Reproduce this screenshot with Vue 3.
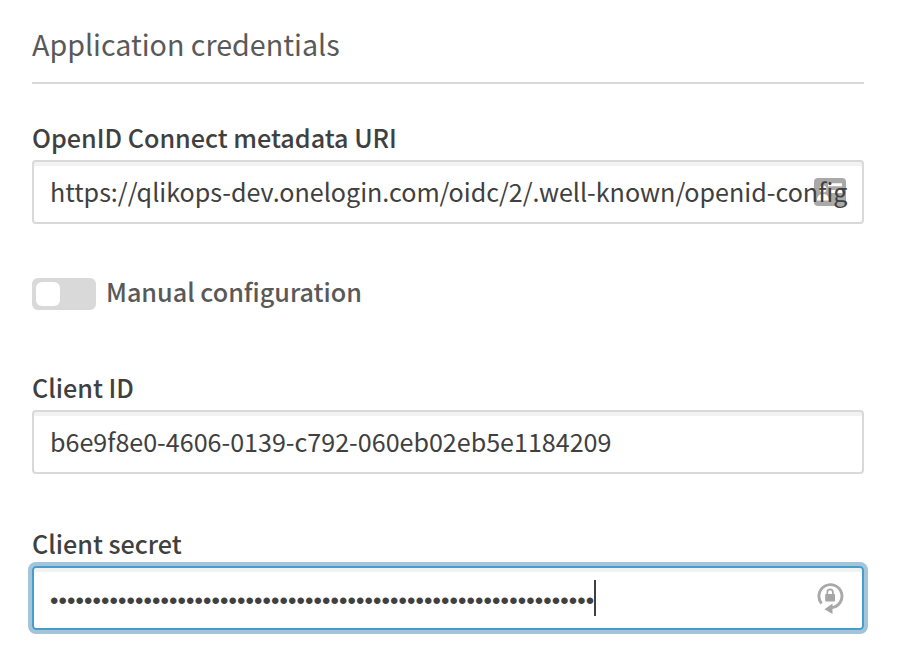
<script setup>
const metadataUri = 'https://qlikops-dev.onelogin.com/oidc/2/.well-known/openid-config'
const clientId = 'b6e9f8e0-4606-0139-c792-060eb02eb5e1184209'
const secretMask = '•'.repeat(64)
</script>

<template>
  <main class="form">
    <h2 class="heading">Application credentials</h2>

    <section class="field uri">
      <label class="label">OpenID Connect metadata URI</label>
      <div class="input">
        <svg class="icon card" viewBox="0 0 32 28" width="32" height="28">
          <rect width="32" height="28" rx="4" fill="#a9a9a9" />
          <circle cx="9" cy="11" r="3.500" fill="#fff" />
          <path d="M3 22.500c0-4 2-6.500 6-6.500s6 2.500 6 6.500z" fill="#fff" />
          <path d="M14 6.700h14M16 13.500h12" stroke="#fff" stroke-width="3" />
        </svg>
        <span class="value">{{ metadataUri }}</span>
      </div>
    </section>

    <div class="toggle-row">
      <span class="toggle"><span class="knob"></span></span>
      <span class="toggle-label">Manual configuration</span>
    </div>

    <section class="field client">
      <label class="label">Client ID</label>
      <div class="input"><span class="value">{{ clientId }}</span></div>
    </section>

    <section class="field secret">
      <label class="label">Client secret</label>
      <div class="input focused">
        <span class="dots">{{ secretMask }}</span><span class="caret"></span>
        <svg class="icon lock" viewBox="0 0 28 34" width="28" height="34">
          <path d="M5.600 23.500A11.500 11.500 0 1 1 15.500 27.600" fill="none" stroke="#a9a9a9" stroke-width="2.900" />
          <path d="M8.500 29.300l8-5.800v10.500z" fill="#a6a6a6" />
          <rect x="9.200" y="14" width="9.800" height="7.600" rx="0.800" fill="#a6a6a6" />
          <path d="M11.300 14.500v-2.300a2.800 2.800 0 0 1 5.600 0v2.300" fill="none" stroke="#a6a6a6" stroke-width="1.700" />
        </svg>
      </div>
    </section>
  </main>
</template>

<style>
body { background: #fff; }
</style>

<style scoped>
.form {
  box-sizing: border-box;
  width: 904px;
  height: 660px;
  padding: 24px 40px 0 32px;
  font-family: "Noto Sans CJK SC", "Noto Sans", sans-serif;
  color: #404040;
  overflow: hidden;
}
.heading {
  box-sizing: border-box;
  height: 60px;
  margin: 0;
  border-bottom: 2px solid #d9d9d9;
  font-size: 28.65px;
  line-height: 40px;
  font-weight: 400;
  color: #595959;
  white-space: nowrap;
}
.field { display: flex; flex-direction: column; }
.uri { margin-top: 36px; }
.client { margin-top: 60px; }
.secret { margin-top: 52px; }
.label {
  height: 40px;
  font-size: 25.15px;
  line-height: 34px;
  font-weight: 500;
  white-space: nowrap;
}
.input {
  position: relative;
  box-sizing: border-box;
  display: flex;
  align-items: center;
  height: 64px;
  padding: 0 16px;
  border: 2px solid #d9d9d9;
  border-radius: 4px;
  box-shadow: inset 0 4px 0 #f2f2f2;
}
.focused {
  border-color: #469dcd;
  box-shadow: 0 0 0 4px #a3c4d9, inset 0 4px 0 #f2f2f2;
}
.value {
  position: relative;
  padding-bottom: 2px;
  font-size: 25.08px;
  line-height: 36px;
  white-space: nowrap;
}
.toggle-row {
  display: flex;
  align-items: center;
  gap: 10px;
  height: 32px;
  margin-top: 54px;
}
.toggle {
  box-sizing: border-box;
  width: 64px;
  height: 32px;
  padding: 4px;
  border-radius: 6px;
  background: #d9d9d9;
}
.knob {
  display: block;
  width: 24px;
  height: 24px;
  border-radius: 6px;
  background: #fff;
}
.toggle-label {
  padding-bottom: 7px;
  font-size: 25.18px;
  line-height: 32px;
  font-weight: 500;
  color: #595959;
}
.dots {
  padding-top: 5px;
  font-family: "Liberation Sans", sans-serif;
  font-size: 24px;
  line-height: 36px;
  letter-spacing: 0.1px;
}
.caret { width: 2px; height: 36px; background: #404040; }
.icon { position: absolute; }
.card { right: 16px; top: 16px; }
.lock { right: 18px; top: 12px; }
</style>
